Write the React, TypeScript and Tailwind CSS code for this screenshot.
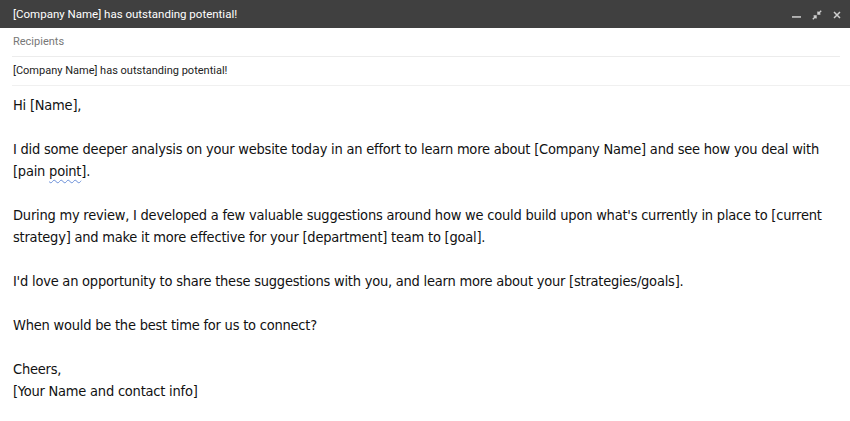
import React from "react";

export default function App() {
  const body = "font-['DejaVu_Sans_Condensed','DejaVu_Sans',sans-serif]";
  return (
    <div className="w-[850px] h-[421px] bg-white overflow-hidden font-['Roboto',sans-serif]">
      <div className="h-[28px] bg-[#404040] flex items-center pl-[13px] pr-[9px]">
        <div className="text-white text-[11.5px] flex-1 pt-px">[Company Name] has outstanding potential!</div>
        <div className="flex items-center text-[#cfcfcf] pt-[2px]">
          <svg width="11" height="11" viewBox="0 0 11 11" className="mr-[10px]"><rect x="1" y="6.2" width="9" height="1.5" fill="currentColor" /></svg>
          <svg width="10" height="10" viewBox="0 0 10 10" fill="none" stroke="currentColor" strokeWidth="1.4" className="mr-[11px]">
            <path d="M0.8 9.2 L4 6 M1.6 6 H4 V8.4" />
            <path d="M9.2 0.8 L6 4 M8.4 4 H6 V1.6" />
          </svg>
          <svg width="8" height="8" viewBox="0 0 8 8" fill="none" stroke="currentColor" strokeWidth="1.5">
            <path d="M1 1 L7 7 M7 1 L1 7" />
          </svg>
        </div>
      </div>
      <div className="pl-[12px]">
        <div className="h-[29px] flex items-center border-b border-[#ececec] mr-[10px] pl-px pt-px text-[11px] text-[#777777]">Recipients</div>
        <div className="h-[29px] flex items-center border-b border-[#f0f0f0] pl-px pt-px text-[11px] text-[#222222]">[Company Name] has outstanding potential!</div>
      </div>
      <div className={`${body} px-[13px] pt-[8px] text-[14.5px] tracking-[-0.22px] leading-[22px] text-[#111111]`}>
        <p>Hi [Name],</p>
        <p className="mt-[22px]">
          I did some deeper analysis on your website today in an effort to learn more about [Company Name] and see how you deal with [pain{" "}
          <span className="underline decoration-wavy decoration-[#6a8fd8] decoration-[1px] underline-offset-[3px]">point</span>].
        </p>
        <p className="mt-[22px]">
          During my review, I developed a few valuable suggestions around how we could build upon what's currently in place to [current strategy] and make it more effective for your [department] team to [goal].
        </p>
        <p className="mt-[22px]">
          I'd love an opportunity to share these suggestions with you, and learn more about your [strategies/goals].
        </p>
        <p className="mt-[22px]">When would be the best time for us to connect?</p>
        <p className="mt-[22px]">Cheers,</p>
        <p>[Your Name and contact info]</p>
      </div>
    </div>
  );
}
